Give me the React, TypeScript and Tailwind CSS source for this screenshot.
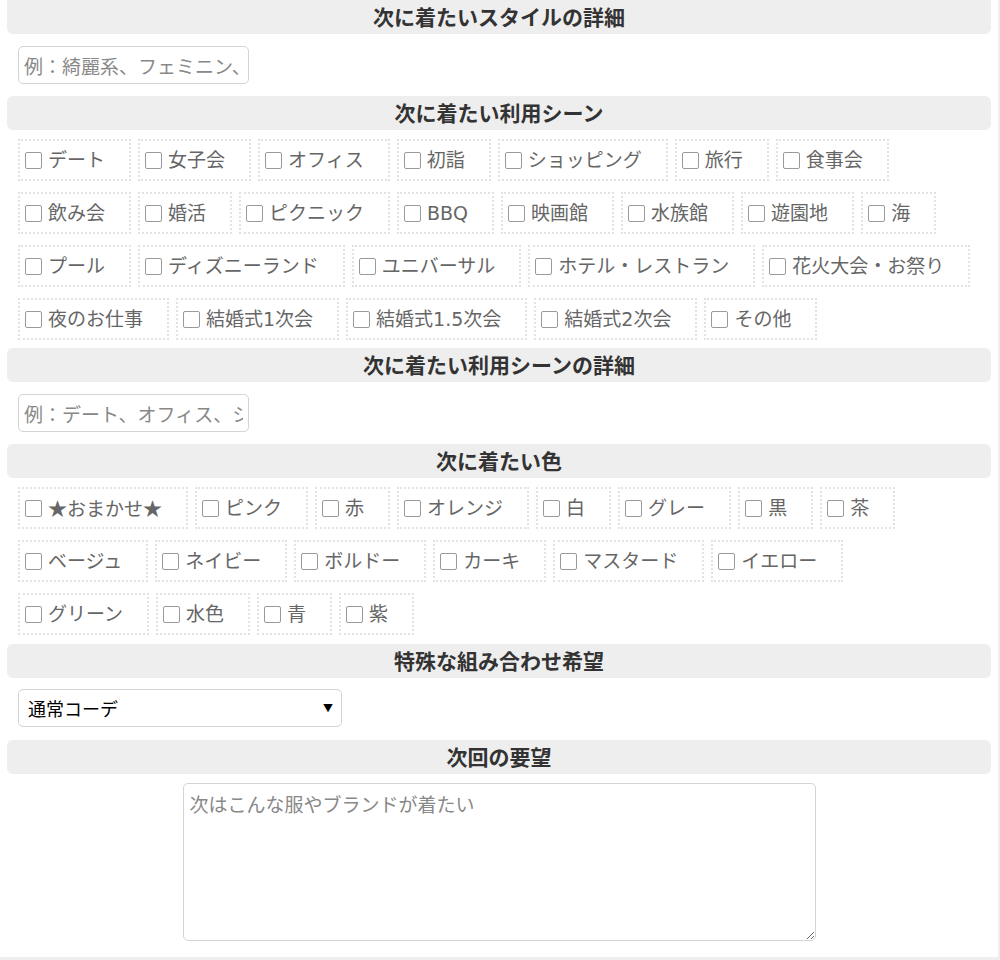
import React from "react";

const scenes = [
  "デート", "女子会", "オフィス", "初詣", "ショッピング", "旅行", "食事会",
  "飲み会", "婚活", "ピクニック", "BBQ", "映画館", "水族館", "遊園地", "海",
  "プール", "ディズニーランド", "ユニバーサル", "ホテル・レストラン", "花火大会・お祭り",
  "夜のお仕事", "結婚式1次会", "結婚式1.5次会", "結婚式2次会", "その他",
];

const colors = [
  "★おまかせ★", "ピンク", "赤", "オレンジ", "白", "グレー", "黒", "茶",
  "ベージュ", "ネイビー", "ボルドー", "カーキ", "マスタード", "イエロー",
  "グリーン", "水色", "青", "紫",
];

const font = { fontFamily: '"DejaVu Sans", "Noto Sans CJK JP", sans-serif' };

function Heading({ children }: { children: React.ReactNode }) {
  return (
    <div className="h-[34px] shrink-0 rounded-[6px] bg-[#eeeeee] flex items-center justify-center text-[21px] font-bold text-[#333] [font-family:'Noto_Sans_CJK_JP',sans-serif]">
      {children}
    </div>
  );
}

function Label({ text }: { text: string }) {
  const parts = text.split(/(★)/).filter(Boolean);
  return (
    <label className="h-[42px] flex items-center border-2 border-dotted border-[#e2e2e2] pl-[5px] pr-[24px] text-[19px] text-[#666] cursor-pointer">
      <span className="w-[17px] h-[17px] border border-[#9a9a9a] rounded-[2px] bg-white shrink-0" />
      <span className="ml-[6px] whitespace-nowrap leading-none" style={font}>
        {parts.map((p, i) =>
          p === "★" ? (
            <span key={i} className="[font-family:'Noto_Sans_CJK_JP',sans-serif]">★</span>
          ) : (
            <span key={i}>{p}</span>
          )
        )}
      </span>
    </label>
  );
}

export default function App() {
  return (
    <div className="w-[1000px] h-[960px] border-r-2 border-b-[3px] border-[#eeeeee] pl-[7px] pr-[7px] flex flex-col bg-white [font-family:'Noto_Sans_CJK_JP',sans-serif]">
      <div className="h-[34px] shrink-0 rounded-b-[6px] bg-[#eeeeee] flex items-center justify-center text-[21px] font-bold text-[#333]">
        次に着たいスタイルの詳細
      </div>

      <div className="pl-[11px] mt-[12px] mb-[12px]">
        <input
          type="text"
          placeholder="例：綺麗系、フェミニン、カジュアル"
          className="w-[231px] h-[38px] border border-[#d4d4d4] rounded-[5px] px-[5px] text-[19px] text-[#555] placeholder:text-[#888] outline-none"
        />
      </div>

      <Heading>次に着たい利用シーン</Heading>
      <div className="pl-[11px] pr-[14px] pt-[9px] pb-[8px] flex flex-wrap gap-x-[7px] gap-y-[11px]">
        {scenes.map((s) => (
          <Label key={s} text={s} />
        ))}
      </div>

      <Heading>次に着たい利用シーンの詳細</Heading>
      <div className="pl-[11px] mt-[12px] mb-[12px]">
        <input
          type="text"
          placeholder="例：デート、オフィス、ショッピング"
          className="w-[231px] h-[38px] border border-[#d4d4d4] rounded-[5px] px-[5px] text-[19px] text-[#555] placeholder:text-[#888] outline-none"
        />
      </div>

      <Heading>次に着たい色</Heading>
      <div className="pl-[11px] pr-[14px] pt-[9px] pb-[9px] flex flex-wrap gap-x-[7px] gap-y-[11px]">
        {colors.map((c) => (
          <Label key={c} text={c} />
        ))}
      </div>

      <Heading>特殊な組み合わせ希望</Heading>
      <div className="pl-[11px] mt-[11px] mb-[13px]">
        <div className="relative w-[324px] h-[38px]">
          <select
            defaultValue="normal"
            className="appearance-none w-full h-full border border-[#d4d4d4] rounded-[5px] bg-white pl-[9px] pr-[24px] text-[18px] text-black outline-none"
          >
            <option value="normal">通常コーデ</option>
            <option value="special">特殊コーデ</option>
          </select>
          <span className="absolute right-[9px] top-[11px] text-[10px] text-black pointer-events-none">▼</span>
        </div>
      </div>

      <Heading>次回の要望</Heading>
      <div className="flex justify-center mt-[9px]">
        <textarea
          placeholder="次はこんな服やブランドが着たい"
          className="w-[633px] h-[158px] border border-[#d4d4d4] rounded-[5px] px-[6px] py-[6px] text-[19px] text-[#555] placeholder:text-[#888] outline-none"
        />
      </div>
    </div>
  );
}
